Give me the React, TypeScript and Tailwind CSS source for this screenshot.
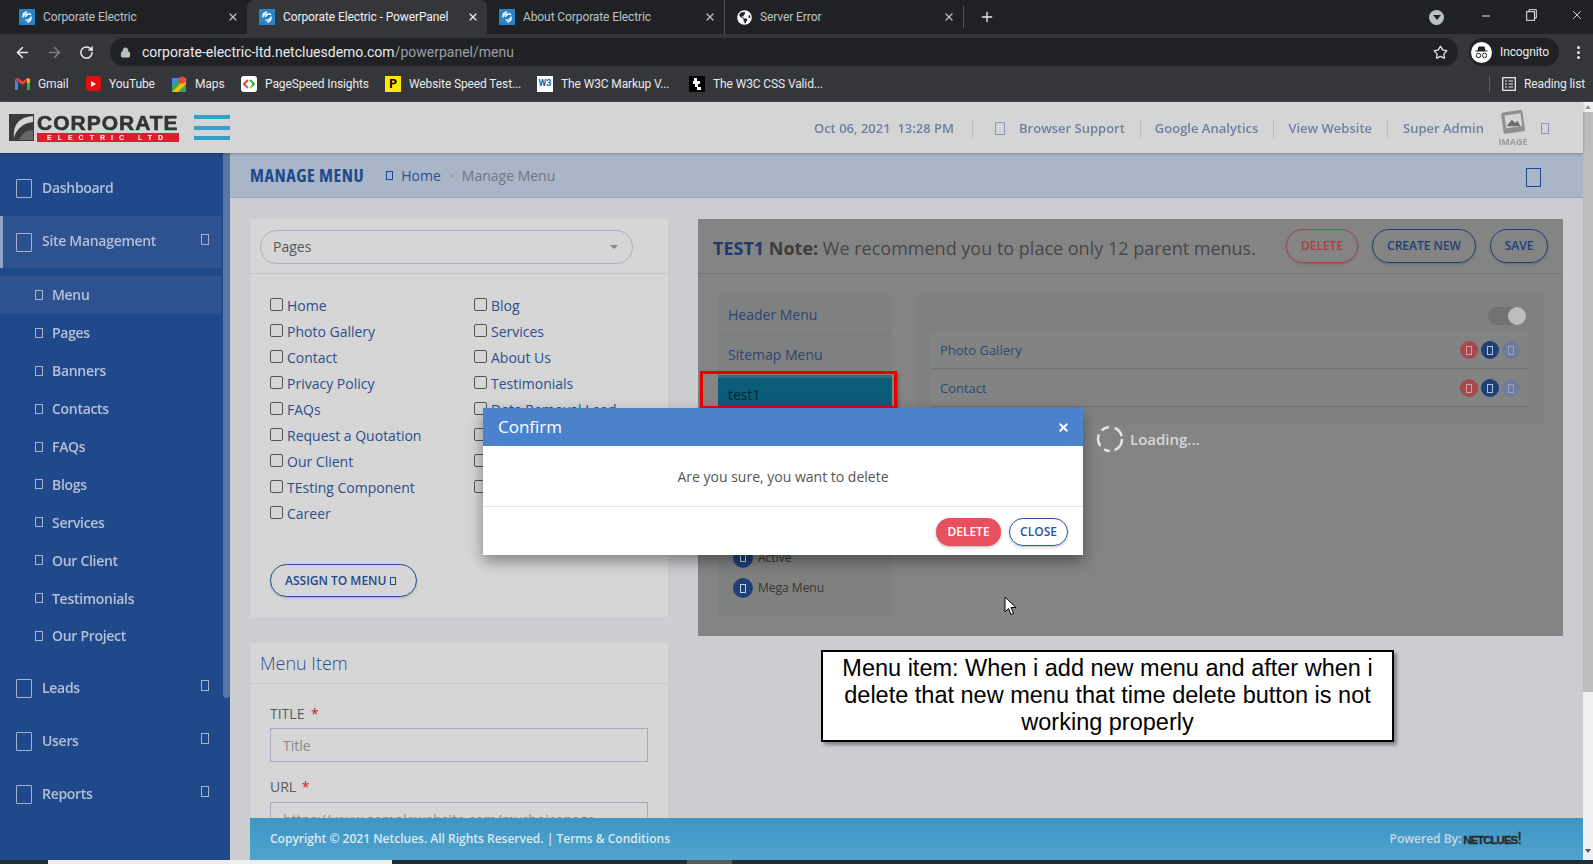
import React from "react";
import { ArrowLeft, ArrowRight, RotateCw, Lock, Star, Plus, X, Minus } from "lucide-react";
import { FaGlobeAmericas } from "react-icons/fa";

function Tofu({ c }: { c: string }) {
  return <span className={"inline-block shrink-0 border-solid " + c} />;
}

function Favicon() {
  return (
    <svg width="16" height="16" viewBox="0 0 16 16" className="shrink-0">
      <rect width="16" height="16" fill="#2a83c4" />
      <path d="M8 3c-3 0-4.5 2-4 4.5 1-2 3-3 5.5-2.5M8 13c3 0 4.5-2 4-4.5-1 2-3 3-5.5 2.5M6 8c2-3 5-4 6-2" fill="none" stroke="#fff" strokeWidth="1.3" />
    </svg>
  );
}

function Tab({ title, active, globe, w, sep }: { title: string; active?: boolean; globe?: boolean; w: string; sep?: boolean }) {
  return (
    <div className={"flex items-center h-[34px] pl-3 pr-2 shrink-0 " + w + " " + (active ? "bg-[#35363a] rounded-t-lg text-[#f1f1f1]" : "text-[#bdc1c6]") + (sep ? " border-r border-[#55575c]" : "")}>
      {globe ? <FaGlobeAmericas size={15} color="#fff" className="shrink-0" /> : <Favicon />}
      <span className="ml-2 flex-1 text-[12px] tracking-[-0.1px] whitespace-nowrap overflow-hidden">{title}</span>
      <X size={12} strokeWidth={2.4} color={active ? "#f1f1f1" : "#bdc1c6"} className="shrink-0" />
    </div>
  );
}

function Bookmark({ w, icon, text }: { w: string; icon: React.ReactNode; text: string }) {
  return (
    <div className={"flex items-center shrink-0 " + w}>
      <span className="w-4 h-4 flex items-center justify-center shrink-0">{icon}</span>
      <span className="ml-2 text-[12px] tracking-[-0.12px] text-[#e8eaed] whitespace-nowrap">{text}</span>
    </div>
  );
}

function SideMain({ label, arrow, active }: { label: string; arrow?: boolean; active?: boolean }) {
  return (
    <div className={"relative h-[53px] flex items-center pl-4 pr-[13px] " + (active ? "bg-[#2e5190] border-l-[3px] border-[#8fa3c6] !pl-[13px] !h-[52px]" : "")}>
      <Tofu c="w-4 h-[19px] border-[1.5px] border-[#a4b4d0] rounded-[1px]" />
      <span className={"ml-[10px] flex-1 text-[14px] font-semibold tracking-[-0.3px] text-[#b3c0d8] blur-[0.6px] " + (active ? "-mt-[4px]" : "-mt-[2px]")}>{label}</span>
      {arrow && <Tofu c="w-2 h-[11px] -mt-[5px] border-[1.5px] border-[#a4b4d0]" />}
    </div>
  );
}

function SideSub({ label, active }: { label: string; active?: boolean }) {
  return (
    <div className={"h-[37.9px] flex items-center pl-[35px] " + (active ? "bg-[#2e5190]" : "")}>
      <Tofu c="w-2 h-[10px] border-[1.5px] border-[#a4b4d0]" />
      <span className="ml-[9px] text-[14px] font-semibold tracking-[-0.3px] text-[#b3c0d8] blur-[0.6px]">{label}</span>
    </div>
  );
}

function Check({ label }: { label?: string }) {
  return (
    <div className="h-[26px] flex items-center">
      <span className="w-[13px] h-[13px] -mt-[3px] border border-[#555] rounded-[2px] shrink-0" />
      {label && <span className="ml-1 -mt-[2px] text-[14px] text-[#2c4f90] whitespace-nowrap">{label}</span>}
    </div>
  );
}

function Circle({ c, t, size = "w-[18px] h-[18px]" }: { c: string; t: string; size?: string }) {
  return (
    <span className={"rounded-full flex items-center justify-center shrink-0 " + size + " " + c}>
      <Tofu c={"w-[6px] h-[9px] border-[1.5px] " + t} />
    </span>
  );
}

function MenuRow({ label }: { label: string }) {
  return (
    <div className="h-9 bg-[#828483] shadow-[0_1px_1px_rgba(0,0,0,0.1)] flex items-center pl-[10px] pr-[9px]">
      <span className="flex-1 mt-[2px] text-[13px] text-[#2f4471]">{label}</span>
      <div className="flex gap-[3px]">
        <Circle c="bg-[#a8474d]" t="border-[#c9a0a3]" />
        <Circle c="bg-[#1f3f77]" t="border-[#b5c0d2]" />
        <Circle c="bg-[#6c7c9b]" t="border-[#99a5b9]" />
      </div>
    </div>
  );
}

const subs = ["Pages", "Banners", "Contacts", "FAQs", "Blogs", "Services", "Our Client", "Testimonials", "Our Project"];
const col1 = ["Home", "Photo Gallery", "Contact", "Privacy Policy", "FAQs", "Request a Quotation", "Our Client", "TEsting Component", "Career"];
const col2 = ["Blog", "Services", "About Us", "Testimonials", "Data Removal Lead", "", "", ""];

const Sep = () => <span className="block w-px h-[18px] bg-[#b9bcc2] shrink-0" />;

export default function App() {
  return (
    <div className="relative w-[1593px] h-[864px] overflow-hidden flex flex-col bg-[#cbcdd1] font-['Open_Sans',sans-serif]">
      {/* Browser tabs */}
      <div className="h-[34px] bg-[#202124] flex items-center pl-[7px] font-['Roboto',sans-serif] shrink-0">
        <Tab w="w-[240px]" title="Corporate Electric" />
        <Tab w="w-[240px]" title="Corporate Electric - PowerPanel" active />
        <Tab w="w-[238px]" title="About Corporate Electric" sep />
        <Tab w="w-[239px] !h-[22px]" title="Server Error" globe sep />
        <Plus size={16} color="#e8eaed" className="ml-[15px]" />
        <div className="ml-auto flex items-center h-full pr-[9px]">
          <span className="w-[15px] h-[15px] rounded-full bg-[#bdc1c6] flex items-center justify-center mr-[36px]">
            <span className="w-0 h-0 border-x-[4px] border-x-transparent border-t-[5px] border-t-[#202124]" />
          </span>
          <Minus size={12} color="#e8eaed" className="mr-[34px] -mt-[3px]" />
          <svg width="11" height="12" viewBox="0 0 11 12" className="mr-[33px] -mt-1">
            <path d="M3 2.500V.7h7.300v8.300H8.500" fill="none" stroke="#e8eaed" strokeWidth="1" />
            <rect x="0.700" y="2.700" width="7.800" height="8.600" fill="none" stroke="#e8eaed" strokeWidth="1" />
          </svg>
          <X size={14} color="#e8eaed" strokeWidth={1.5} className="-mt-1" />
        </div>
      </div>
      {/* Toolbar */}
      <div className="h-[34px] pt-[2px] bg-[#35363a] flex items-center pl-[14px] font-['Roboto',sans-serif] shrink-0">
        <ArrowLeft size={17} color="#e8eaed" strokeWidth={2.2} />
        <ArrowRight size={17} color="#7d7f83" strokeWidth={2.2} className="ml-[15px]" />
        <RotateCw size={15} color="#e8eaed" strokeWidth={2.4} className="ml-[16px]" />
        <div className="ml-[16px] w-[1348px] h-7 bg-[#202124] rounded-full flex items-center pl-[10px] pr-[10px]">
          <Lock size={11} color="#bdc1c6" fill="#bdc1c6" />
          <span className="ml-[11px] text-[14px] text-[#e8eaed]">corporate-electric-ltd.netcluesdemo.com<span className="text-[#9aa0a6]">/powerpanel/menu</span></span>
          <Star size={15} color="#e8eaed" className="ml-auto" />
        </div>
        <div className="ml-[11px] w-[90px] h-7 rounded-full bg-[#202124] flex items-center pl-[2px]">
          <span className="w-[21px] h-[21px] rounded-full bg-white flex items-center justify-center">
            <svg width="15" height="15" viewBox="0 0 15 15">
              <path d="M4.5 1.5h6l1 4h2v1h-12v-1h2z" fill="#202124" />
              <circle cx="4.5" cy="10.5" r="2.2" fill="none" stroke="#202124" strokeWidth="1" />
              <circle cx="10.5" cy="10.5" r="2.2" fill="none" stroke="#202124" strokeWidth="1" />
            </svg>
          </span>
          <span className="ml-2 text-[12px] tracking-[-0.1px] text-[#e8eaed]">Incognito</span>
        </div>
        <span className="ml-[18px] flex flex-col gap-[2px]">
          <span className="w-[3px] h-[3px] rounded-full bg-[#e8eaed]" />
          <span className="w-[3px] h-[3px] rounded-full bg-[#e8eaed]" />
          <span className="w-[3px] h-[3px] rounded-full bg-[#e8eaed]" />
        </span>
      </div>
      {/* Bookmarks */}
      <div className="h-[34px] pb-[2px] bg-[#35363a] border-b border-[#4a4b4f] flex items-center pl-[14px] font-['Roboto',sans-serif] shrink-0">
        <Bookmark w="w-[71px]" text="Gmail" icon={
          <svg width="15" height="12" viewBox="0 0 15 12">
            <path d="M0 1v11h3V5z" fill="#4285f4" /><path d="M15 1v11h-3V5z" fill="#34a853" />
            <path d="M0 1l7.5 6L15 1 12 0 7.5 3.5 3 0z" fill="#ea4335" /><path d="M12 0l3 1v3l-3 2z" fill="#fbbc04" />
          </svg>} />
        <Bookmark w="w-[86px]" text="YouTube" icon={
          <span className="w-[15px] h-[15px] bg-[#e01010] rounded-[3px] flex items-center justify-center">
            <span className="w-0 h-0 border-y-[3px] border-y-transparent border-l-[5px] border-l-white" />
          </span>} />
        <Bookmark w="w-[70px]" text="Maps" icon={
          <svg width="14" height="16" viewBox="0 0 14 16">
            <rect y="2" width="14" height="14" fill="#34a853" /><path d="M0 16L14 2v6L6 16z" fill="#fbbc04" /><path d="M0 2h8L0 10z" fill="#4285f4" />
            <circle cx="10" cy="4" r="3.5" fill="#ea4335" />
          </svg>} />
        <Bookmark w="w-[144px]" text="PageSpeed Insights" icon={
          <span className="w-4 h-4 bg-white rounded-[3px] flex items-center justify-center">
            <svg width="12" height="10" viewBox="0 0 12 10">
              <path d="M5 1L1 5l2.2 2.2" fill="none" stroke="#ea4335" strokeWidth="2" /><path d="M3.2 7.2L5 9" fill="none" stroke="#4285f4" strokeWidth="2" />
              <path d="M7 1l4 4-2.2 2.2" fill="none" stroke="#34a853" strokeWidth="2" /><path d="M8.8 7.2L7 9" fill="none" stroke="#fbbc04" strokeWidth="2" />
            </svg>
          </span>} />
        <Bookmark w="w-[152px]" text="Website Speed Test..." icon={
          <span className="w-4 h-4 bg-[#ffe600] flex items-center justify-center text-[12px] font-bold text-black leading-none">P</span>} />
        <Bookmark w="w-[152px]" text="The W3C Markup V..." icon={
          <span className="w-4 h-4 bg-white flex items-center justify-center text-[9px] font-bold text-[#1a5ca8] leading-none">W3</span>} />
        <Bookmark w="w-[800px]" text="The W3C CSS Valid..." icon={
          <svg width="16" height="16" viewBox="0 0 16 16"><rect width="16" height="16" fill="#000" /><path d="M5 2h3v3h3v3H9v3h3v3H8v-3H6V8H4V5h1z" fill="#fff" /></svg>} />
        <span className="w-px h-4 bg-[#5f6368] shrink-0" />
        <svg width="14" height="14" viewBox="0 0 14 14" className="ml-3 shrink-0">
          <rect x="0.7" y="0.7" width="12.6" height="12.6" fill="none" stroke="#e8eaed" strokeWidth="1.3" />
          <path d="M3 4h2M6.500 4h4.500M3 7h2M6.500 7h4.500M3 10h2M6.500 10h4.500" stroke="#e8eaed" strokeWidth="1.2" />
        </svg>
        <span className="ml-[8px] text-[12px] tracking-[-0.1px] text-[#e8eaed] whitespace-nowrap">Reading list</span>
      </div>

      {/* Page */}
      <div className="flex flex-1 min-h-0">
        <div className="flex-1 min-w-0 flex flex-col">
          {/* Site header */}
          <div className="h-[51px] bg-[#d5d5d5] shadow-[0_1px_3px_rgba(0,0,0,0.25)] relative z-10 flex items-center pl-[9px] shrink-0">
            <div className="flex items-center blur-[0.5px]">
              <svg width="25" height="27" viewBox="0 0 25 27" className="shrink-0">
                <rect width="25" height="27" fill="#3a3a3a" />
                <path d="M24 2C10 3 4 10 5 24c2-8 8-15 19-16z" fill="#d5d5d5" />
                <path d="M24 16c-6 0-11 3-14 10h14z" fill="#666" />
              </svg>
              <div className="ml-[3px] flex flex-col w-[142px]">
                <span className="text-[21px] leading-[17px] font-black font-['Liberation_Sans',sans-serif] text-[#333] tracking-[1px] [-webkit-text-stroke:0.6px_#333] whitespace-nowrap">CORPORATE</span>
                <span className="mt-[2px] h-[9px] bg-[#d8202f] text-white text-[7px] leading-[9px] font-bold tracking-[6px] text-center whitespace-nowrap overflow-hidden font-['Liberation_Sans',sans-serif]">ELECTRIC LTD</span>
              </div>
            </div>
            <div className="ml-[15px] w-9 flex flex-col gap-[6.5px]">
              <span className="h-1 bg-[#35a0cc]" /><span className="h-1 bg-[#35a0cc]" /><span className="h-1 bg-[#35a0cc]" />
            </div>
            <div className="ml-auto flex items-center pt-[2px] pr-[34px] text-[13px] font-semibold text-[#6f7f9c]">
              <span className="blur-[0.5px] whitespace-nowrap">Oct 06, 2021&nbsp;&nbsp;13:28 PM</span>
              <span className="ml-[18px] mr-[22px]"><Sep /></span>
              <Tofu c="w-[10px] h-[13px] mr-[14px] border-[1.5px] border-[#8a97ae] rounded-[1px]" />
              <span className="blur-[0.5px] whitespace-nowrap">Browser Support</span>
              <span className="ml-[15px] mr-[14px]"><Sep /></span>
              <span className="blur-[0.5px] whitespace-nowrap">Google Analytics</span>
              <span className="ml-[15px] mr-[14px]"><Sep /></span>
              <span className="blur-[0.5px] whitespace-nowrap">View Website</span>
              <span className="mx-[15px]"><Sep /></span>
              <span className="blur-[0.5px] whitespace-nowrap">Super Admin</span>
              <div className="ml-3 -mt-[2px] w-[34px] flex flex-col items-center blur-[0.5px]">
                <svg width="30" height="27" viewBox="0 0 26 25">
                  <rect x="3" y="1" width="20" height="20" rx="2" fill="#8f8f8f" transform="rotate(-8 13 11)" />
                  <rect x="6" y="4" width="15" height="12" fill="#d5d5d5" transform="rotate(-8 13 11)" />
                  <path d="M7 15l5-6 3 3 2-2 3 5z" fill="#6d6d6d" />
                </svg>
                <span className="text-[9px] leading-[9px] font-bold text-[#999]">IMAGE</span>
              </div>
              <Tofu c="w-2 h-[11px] ml-[11px] border-[1.5px] border-[#8a97ae]" />
            </div>
          </div>

          <div className="flex flex-1 min-h-0">
            {/* Sidebar */}
            <div className="relative w-[230px] shrink-0 bg-[#20498c] pt-[9px] pr-2">
              <SideMain label="Dashboard" />
              <div className="h-px" />
              <SideMain label="Site Management" arrow active />
              <div className="h-[8px]" />
              <SideSub label="Menu" active />
              {subs.map((s) => <SideSub key={s} label={s} />)}
              <div className="h-[7px]" />
              <SideMain label="Leads" arrow />
              <SideMain label="Users" arrow />
              <SideMain label="Reports" arrow />
              <span className="absolute right-0 top-0 w-[7px] h-[545px] bg-[#5a75a5] rounded-b" />
            </div>

            <div className="flex-1 min-w-0 flex flex-col">
              {/* Breadcrumb */}
              <div className="h-[45px] bg-[#a9b6c8] border-b border-[#90a6c9] flex items-center pl-5 pr-[42px] shrink-0">
                <span className="text-[18px] font-bold text-[#20498c] font-stretch-condensed tracking-[0.55px] whitespace-nowrap">MANAGE MENU</span>
                <Tofu c="w-[7px] h-[9px] ml-[22px] border-[1.5px] border-[#20498c]" />
                <span className="ml-2 text-[14px] text-[#2c4f90]">Home</span>
                <span className="ml-[10px] w-[3px] h-[3px] border border-[#8f9bb0]" />
                <span className="ml-2 text-[14px] text-[#6f7682]">Manage Menu</span>
                <Tofu c="w-[15px] h-[19px] mt-1 ml-auto border border-[#20498c]" />
              </div>

              {/* Content */}
              <div className="relative flex-1 min-h-0 overflow-hidden flex items-start gap-[30px] pl-5 pr-5 pt-[21px]">
                <div className="w-[418px] shrink-0 flex flex-col gap-[26px]">
                  {/* Pages card */}
                  <div className="h-[398px] bg-[#d6d6d6]">
                    <div className="h-[55px] border-b border-[#c5c7cc] pt-[11px] pl-[10px]">
                      <div className="w-[373px] h-[34px] rounded-full border border-[#a8b2c8] flex items-center pl-3 pr-[14px]">
                        <span className="-mt-[2px] text-[14px] text-[#555]">Pages</span>
                        <span className="ml-auto w-0 h-0 border-x-[4px] border-x-transparent border-t-[4px] border-t-[#888]" />
                      </div>
                    </div>
                    <div className="flex pl-5 pt-[19px]">
                      <div className="w-[204px]">{col1.map((c) => <Check key={c} label={c} />)}</div>
                      <div>{col2.map((c, i) => <Check key={i} label={c || undefined} />)}</div>
                    </div>
                    <div className="pl-5 mt-[37px]">
                      <div className="w-[147px] h-[33px] pl-[14px] rounded-full border border-[#20498c] shadow-[0_1px_2px_rgba(0,0,0,0.2)] flex items-center gap-1 text-[12px] font-semibold text-[#20498c]">
                        ASSIGN TO MENU <Tofu c="w-[6px] h-2 border border-[#20498c]" />
                      </div>
                    </div>
                  </div>
                  {/* Menu item card */}
                  <div className="bg-[#d6d6d6] h-[300px]">
                    <div className="h-[41px] border-b border-[#c5c7cc] flex items-center pl-[10px]">
                      <span className="text-[18px] text-[#2c4f90] font-light">Menu Item</span>
                    </div>
                    <div className="px-5 pt-[20px]">
                      <div className="text-[14px] leading-5 text-[#5a5a5a]">TITLE <span className="text-[#c8202a] ml-[3px]">*</span></div>
                      <div className="mt-[4px] h-[34px] border border-[#a5a9bb] flex items-center pl-3 text-[14px] text-[#8a8a8a]">Title</div>
                      <div className="mt-[15px] text-[14px] leading-5 text-[#5a5a5a]">URL <span className="text-[#c8202a] ml-[2px]">*</span></div>
                      <div className="mt-[5px] h-[34px] border border-[#a5a9bb] flex items-center pl-3 text-[14px] text-[#8a8a8a] whitespace-nowrap overflow-hidden">https://www.samplewebsite.com/mychoicepage</div>
                    </div>
                  </div>
                </div>

                {/* Right panel */}
                <div className="flex-1 min-w-0 h-[417px] bg-[#848484] flex flex-col">
                  <div className="h-[55px] shrink-0 border-b border-[#767779] flex items-center pl-[15px] pr-[15px]">
                    <span className="mt-[4px] text-[18px] text-[#474747] whitespace-nowrap"><b className="text-[#1f3a6e]">TEST1</b> <b className="text-[#3c3c3c]">Note:</b> We recommend you to place only 12 parent menus.</span>
                    <div className="ml-auto flex gap-[14px] text-[12px] font-semibold">
                      <span className="w-[72px] h-[34px] rounded-full border border-[#a8404a] text-[#a8404a] flex items-center justify-center shadow-[0_1px_2px_rgba(0,0,0,0.2)]">DELETE</span>
                      <span className="w-[104px] h-[34px] rounded-full border border-[#1f3f77] text-[#1f3f77] flex items-center justify-center shadow-[0_1px_2px_rgba(0,0,0,0.2)]">CREATE NEW</span>
                      <span className="w-[58px] h-[34px] rounded-full border border-[#1f3f77] text-[#1f3f77] flex items-center justify-center shadow-[0_1px_2px_rgba(0,0,0,0.2)]">SAVE</span>
                    </div>
                  </div>
                  <div className="flex items-start gap-[24px] pl-5 pr-5 pt-[20px]">
                    <div className="w-[174px] h-[322px] shrink-0 bg-[#7f8180] flex flex-col">
                      <div className="h-[41px] flex items-center pl-[10px] text-[14px] text-[#2f4471] border-b border-[#76787a]">Header Menu</div>
                      <div className="h-[40px] pb-[2px] flex items-center pl-[10px] text-[14px] text-[#2f4471]">Sitemap Menu</div>
                      <div className="relative h-[39px] pb-[4px] bg-[#0a5c78] border-t-[3px] border-[#2f6c82] flex items-center pl-[10px] text-[14px] text-[#0c2430]">
                        test1
                        <span className="absolute -left-[18px] -right-[5px] -top-[7px] h-[38px] border-[3px] border-[#e60000] shadow-[1px_2px_3px_rgba(0,0,0,0.4)]" />
                      </div>
                      <div className="mt-auto pb-[18px] pl-[15px] flex flex-col gap-[10.5px]">
                        <div className="flex items-center gap-[5px] text-[12px] text-[#333]"><Circle size="w-5 h-5" c="bg-[#1f3f77]" t="border-[#c6d0e0]" />Active</div>
                        <div className="flex items-center gap-[5px] text-[12px] text-[#333]"><Circle size="w-5 h-5" c="bg-[#1f3f77]" t="border-[#c6d0e0]" />Mega Menu</div>
                      </div>
                    </div>
                    <div className="flex-1 h-[131px] bg-[#7f8180] px-[14px] pt-[13px]">
                      <div className="flex justify-end pr-[3px]">
                        <span className="w-[38px] h-[18px] rounded-full bg-[#727272] flex justify-end">
                          <span className="w-[18px] h-[18px] rounded-full bg-[#bdbdbd]" />
                        </span>
                      </div>
                      <div className="mt-[7px] flex flex-col gap-[2px]">
                        <MenuRow label="Photo Gallery" />
                        <MenuRow label="Contact" />
                      </div>
                    </div>
                  </div>
                </div>
              </div>

              {/* Footer */}
              <div className="h-[42px] ml-5 shrink-0 bg-gradient-to-b from-[#3d96c5] to-[#50a4cd] flex items-center pl-5 pr-[62px] relative z-10">
                <span className="text-[12px] font-semibold text-[#dfe8ee] whitespace-nowrap">Copyright © 2021 Netclues. All Rights Reserved. | Terms &amp; Conditions</span>
                <span className="ml-auto text-[12px] font-semibold text-[#c8d8e2] whitespace-nowrap">Powered By:</span>
                <span className="ml-[2px] text-[11.5px] font-black text-[#2a2a2a] tracking-[-1px] [-webkit-text-stroke:0.3px_#2a2a2a] font-['Liberation_Sans',sans-serif] whitespace-nowrap">NETCLUES<span className="text-[17px] font-normal">!</span></span>
              </div>
            </div>
          </div>
        </div>

        {/* Page scrollbar */}
        <div className="w-[10px] shrink-0 bg-[#f1f1f1] flex flex-col items-center">
          <span className="h-[10px] flex items-center"><span className="w-0 h-0 border-x-[3px] border-x-transparent border-b-[4px] border-b-[#999]" /></span>
          <span className="w-full h-[580px] bg-[#bdbdbd]" />
          <span className="mt-auto mb-[4px] h-[10px] flex items-center"><span className="w-0 h-0 border-x-[3px] border-x-transparent border-t-[4px] border-t-[#555]" /></span>
        </div>
      </div>

      {/* Taskbar sliver */}
      <div className="h-1 shrink-0 bg-[#1f2e38] flex pl-12">
        <span className="w-[344px] bg-[#eeeeee]" />
        <span className="ml-[295px] w-[45px] bg-[#555b60]" />
      </div>

      {/* Loading indicator */}
      <div className="absolute left-[1095px] top-[424px] flex items-center gap-[5px]">
        <svg width="30" height="30" viewBox="0 0 30 30">
          <circle cx="15" cy="15" r="12" fill="none" stroke="#e5e5e5" strokeWidth="2.5" strokeDasharray="14 5 6 5 12 5 8 6 11 4" />
        </svg>
        <span className="text-[15px] font-semibold text-[#d8d8d8]">Loading...</span>
      </div>

      {/* Annotation */}
      <div className="absolute left-[821px] top-[650px] w-[573px] h-[92px] bg-white border-2 border-black shadow-[3px_3px_3px_rgba(0,0,0,0.35)] flex items-center justify-center text-center text-[23.5px] leading-[27px] pb-px text-black font-['Liberation_Sans',sans-serif] px-[10px]">
        Menu item: When i add new menu and after when i delete that new menu that time delete button is not working properly
      </div>

      {/* Modal */}
      <div className="absolute left-[483px] top-[408px] w-[600px] h-[147px] bg-white shadow-[0_6px_14px_rgba(0,0,0,0.4)] flex flex-col">
        <div className="h-[38px] bg-[#4a82cc] flex items-center pl-[15px] pr-[13px]">
          <span className="text-[17px] text-white">Confirm</span>
          <X size={13} color="#fff" strokeWidth={3.5} className="ml-auto" />
        </div>
        <div className="h-[61px] border-b border-[#e3e3e3] flex items-center justify-center text-[14px] text-[#555]">Are you sure, you want to delete</div>
        <div className="flex-1 pt-[2px] flex items-center justify-end gap-2 pr-[15px] text-[12px] font-semibold">
          <span className="w-[65px] h-[28px] rounded-full bg-[#e9505f] text-white flex items-center justify-center shadow-[0_1px_3px_rgba(0,0,0,0.3)]">DELETE</span>
          <span className="w-[59px] h-[28px] rounded-full border border-[#2a54a0] text-[#2a54a0] flex items-center justify-center shadow-[0_1px_3px_rgba(0,0,0,0.25)]">CLOSE</span>
        </div>
      </div>

      {/* Mouse cursor */}
      <svg className="absolute left-[1004px] top-[596px]" width="14" height="21" viewBox="0 0 14 21">
        <path d="M1 1v15l3.500-3.500 2.500 6 2.500-1-2.500-6h5z" fill="#fff" stroke="#000" strokeWidth="1" />
      </svg>
    </div>
  );
}
